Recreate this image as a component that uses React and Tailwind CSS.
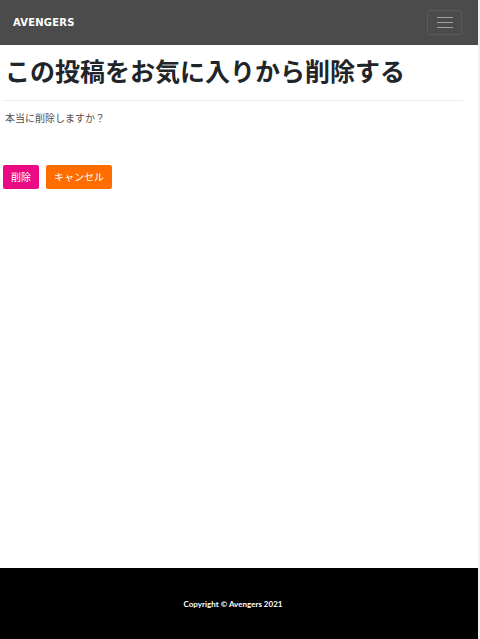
export default function App() {
  return (
    <div className="flex h-[639px] w-[480px] bg-[#f0f0f0]" style={{ fontFamily: '"Noto Sans", "Noto Sans CJK JP", sans-serif' }}>
      <div className="flex w-[478px] flex-col bg-white">
        <nav className="flex h-[45px] items-center justify-between bg-[#4b4b4b] pl-[13px] pr-[16px]">
          <span className="text-[10px] font-bold tracking-[0.02em] text-white" style={{ fontFamily: '"DejaVu Sans", sans-serif' }}>
            AVENGERS
          </span>
          <button className="flex h-[25px] w-[35px] flex-col items-center justify-center gap-[4px] rounded-[3px] border border-[#5a5a5a]">
            <span className="block h-[1px] w-[16px] bg-[#a0a0a0]" />
            <span className="block h-[1px] w-[16px] bg-[#a0a0a0]" />
            <span className="block h-[1px] w-[16px] bg-[#a0a0a0]" />
          </button>
        </nav>
        <main className="flex-1 px-[3px]">
          <h1 className="mt-[8px] pl-[2px] text-[25px] font-bold leading-[36px] text-[#212529]">
            この投稿をお気に入りから削除する
          </h1>
          <hr className="mt-[11px] w-[460px] border-t border-[#eeeeee]" />
          <p className="mt-[9px] pl-[2px] text-[10px] leading-[16px] text-[#5b4d46]">本当に削除しますか？</p>
          <div className="mt-[39px] flex gap-[7px]">
            <button className="h-[24px] rounded-[2px] bg-[#ec0a84] px-[8px] text-[10px] text-white">削除</button>
            <button className="h-[24px] rounded-[2px] bg-[#ff6c00] px-[8px] text-[10px] text-white">キャンセル</button>
          </div>
        </main>
        <footer className="flex h-[71px] items-center justify-center bg-black pr-[12px]">
          <span className="text-[8px] font-bold text-white" style={{ fontFamily: 'Lato, sans-serif' }}>
            Copyright © Avengers 2021
          </span>
        </footer>
      </div>
    </div>
  );
}
